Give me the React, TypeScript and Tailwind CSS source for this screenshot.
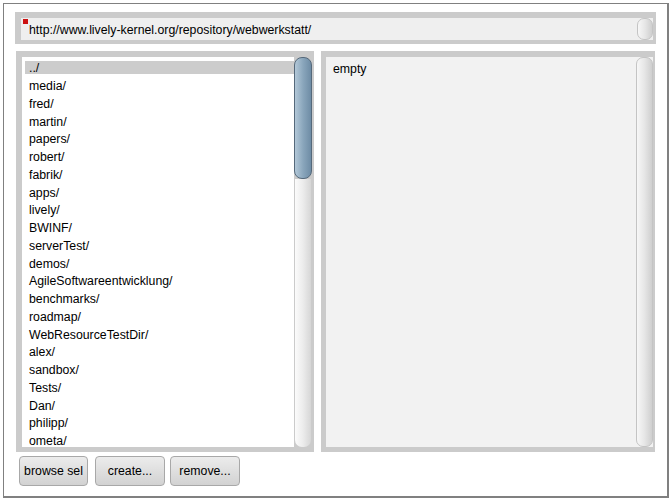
import React from "react";

const dirs = [
  "../",
  "media/",
  "fred/",
  "martin/",
  "papers/",
  "robert/",
  "fabrik/",
  "apps/",
  "lively/",
  "BWINF/",
  "serverTest/",
  "demos/",
  "AgileSoftwareentwicklung/",
  "benchmarks/",
  "roadmap/",
  "WebResourceTestDir/",
  "alex/",
  "sandbox/",
  "Tests/",
  "Dan/",
  "philipp/",
  "ometa/",
];

const font = { fontFamily: '"Liberation Sans", Arial, sans-serif' };

// light grey scroll track / knob used by url field and text pane
const GreyKnob: React.FC<{ className?: string }> = ({ className }) => (
  <div
    className={`rounded-[7px] border border-[#c4c4c4] bg-gradient-to-r from-[#f7f7f7] via-[#e6e6e6] to-[#cfcfcf] ${className || ""}`}
  />
);

const App: React.FC = () => {
  const selected = 0;

  return (
    <div className="w-[671px] h-[499px] bg-white overflow-hidden text-[12.3px] text-black" style={font}>
      <div className="ml-[3px] mt-[3px] w-[666px] h-[495px] border-l border-t border-r-2 border-b-2 border-[#808080] box-border">
        {/* url bar */}
        <div className="ml-[11px] mt-[8px] w-[641px] h-[32px] bg-[#cbcbcb] pt-[6px] pl-[6px] pr-[3px] pb-[4px] box-border">
          <div className="relative flex h-full bg-[#efefef]">
            <div className="absolute left-[2px] top-[1px] w-[5px] h-[5px] bg-[#cc1111]" />
            <div className="flex-1 pl-[8px] pt-[1px] leading-[22px]">
              http://www.lively-kernel.org/repository/webwerkstatt/
            </div>
            <GreyKnob className="w-[16px] h-full" />
          </div>
        </div>

        {/* panes */}
        <div className="flex mt-[7px] h-[401px]">
          <div className="ml-[12px] w-[298px] h-full bg-[#cbcbcb] pt-[6px] pl-[6px] pr-[2px] pb-[5px] box-border">
            <div className="flex h-full">
              <div className="flex-1 bg-white pt-[1.6px] pl-[3px] overflow-hidden">
                {dirs.map((d, i) => (
                  <div key={d} className="h-[17.76px] flex items-center">
                    <div
                      className={`w-full h-[13px] flex items-center pl-[4px] pt-[2px] ${
                        i === selected ? "bg-[#cccccc]" : ""
                      }`}
                    >
                      {d}
                    </div>
                  </div>
                ))}
              </div>
              <div className="w-[18px] h-full flex flex-col">
                <div className="h-[122px] rounded-[8px] border border-[#55697b] bg-gradient-to-r from-[#b3c8d8] via-[#8aa6bc] to-[#6e8ca5]" />
                <div className="flex-1 mx-[1px] rounded-b-[7px] bg-gradient-to-r from-[#fbfbfb] via-[#ececec] to-[#d6d6d6]" />
              </div>
            </div>
          </div>

          <div className="ml-[7px] w-[334px] h-full bg-[#cbcbcb] pt-[6px] pl-[5px] pr-[2px] pb-[5px] box-border">
            <div className="flex h-full bg-[#f2f2f2]">
              <div className="flex-1 pl-[7px] pt-[4px] leading-[17px]">empty</div>
              <GreyKnob className="w-[17px] h-full" />
            </div>
          </div>
        </div>

        {/* buttons */}
        <div className="flex mt-[4px] ml-[15px]">
          {[
            { label: "browse sel", w: "w-[69px]", ml: "" },
            { label: "create...", w: "w-[70px]", ml: "ml-[7px]" },
            { label: "remove...", w: "w-[70px]", ml: "ml-[5px]" },
          ].map((b) => (
            <button
              key={b.label}
              className={`${b.w} ${b.ml} h-[30px] rounded-[4px] border border-[#a8a8a8] bg-gradient-to-b from-[#ececec] to-[#d2d2d2] text-[12.3px] text-black`}
              style={font}
            >
              {b.label}
            </button>
          ))}
        </div>
      </div>
    </div>
  );
};

export default App;
